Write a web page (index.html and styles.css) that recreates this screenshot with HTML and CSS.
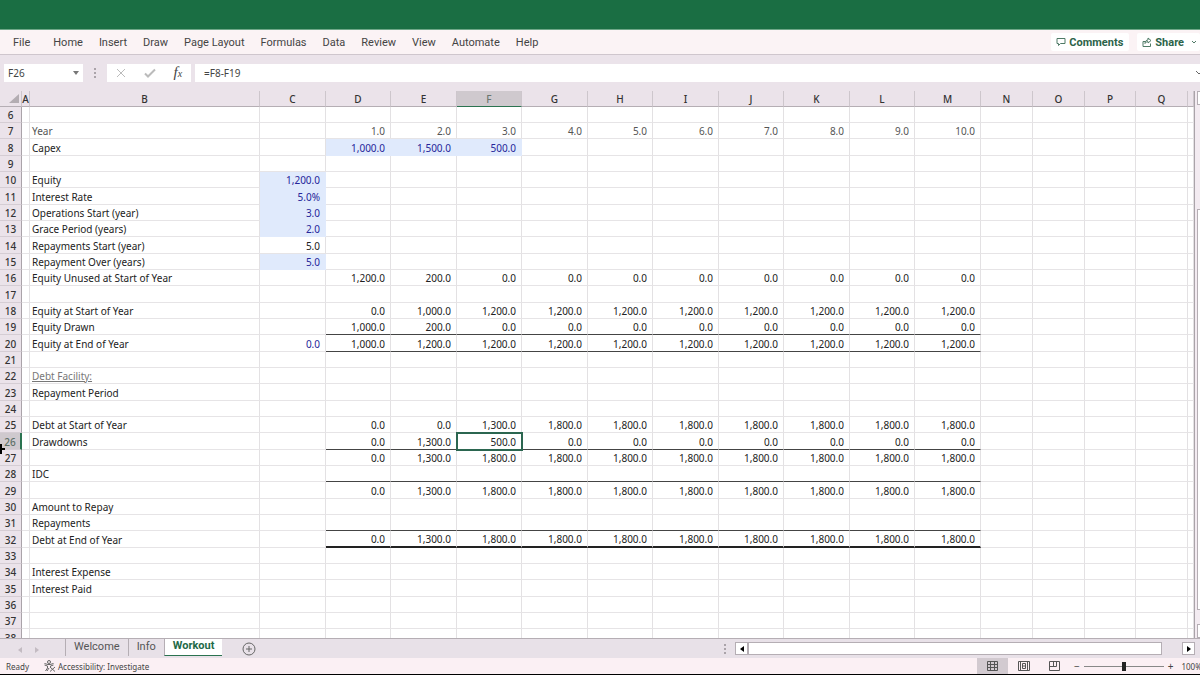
FILE: index.html
```
<!DOCTYPE html>
<html lang="en">
<head>
    <meta charset="UTF-8">
    <meta name="viewport" content="width=device-width, initial-scale=1.0">
    <title>Debt Schedule - Workout</title>
    <link rel="stylesheet" href="styles.css">
</head>
<body>
    <div class="titlebar"></div>

    <header class="ribbon">
        <nav class="menu">
            <button class="file">File</button>
            <button>Home</button>
            <button>Insert</button>
            <button>Draw</button>
            <button>Page Layout</button>
            <button>Formulas</button>
            <button>Data</button>
            <button>Review</button>
            <button>View</button>
            <button>Automate</button>
            <button>Help</button>
        </nav>
        <div class="actions">
            <button class="action">
                <svg width="10" height="10" viewBox="0 0 10 10"><path d="M1 1.5h8v5H4.5L2.5 8.500V6.500H1z"/></svg>
                Comments
            </button>
            <button class="action share">
                <svg width="10" height="10" viewBox="0 0 10 10"><path d="M3 4.500H1V9.500h7.500V6.500M3 6.500c0-2.500 1.500-3.500 3-3.500V1L9 3.500 6 6V4.500C5 4.500 4 5 3 6.500z"/></svg>
                Share
                <svg class="caret" width="6" height="6" viewBox="0 0 6 6"><path d="M1 2l2 2 2-2"/></svg>
            </button>
        </div>
    </header>

    <div class="formula-row">
        <div class="name-box">
            <input type="text" value="F26" aria-label="Name box">
            <svg width="6" height="4" viewBox="0 0 6 4"><path d="M0 0h6L3 4z"/></svg>
        </div>
        <span class="dots"></span>
        <div class="fx-buttons">
            <button aria-label="Cancel"><svg width="10" height="10" viewBox="0 0 10 10"><path d="M1 1l8 8M9 1L1 9"/></svg></button>
            <button aria-label="Enter"><svg width="12" height="10" viewBox="0 0 12 10"><path class="tick" d="M1 5.500L4 8.500 11 1.500"/></svg></button>
            <button class="fx" aria-label="Insert function"><i>f</i><i class="x">x</i></button>
        </div>
        <div class="formula">
            <input type="text" value="=F8-F19" aria-label="Formula bar">
            <svg width="5" height="6" viewBox="0 0 5 6"><path d="M1 1l3 3 3-3"/></svg>
        </div>
    </div>

    <main class="workspace">
        <div class="sheet">
            <table>
                <colgroup>
                    <col class="c-num"><col class="c-a"><col class="c-b">
                    <col class="wide"><col class="mid"><col class="wide"><col class="mid"><col class="wide"><col class="mid">
                    <col class="wide"><col class="mid"><col class="wide"><col class="mid"><col class="wide">
                    <col class="small"><col class="small"><col class="smaller"><col class="small"><col>
                </colgroup>
                <thead>
                    <tr id="letters"></tr>
                </thead>
                <tbody id="rows"></tbody>
            </table>
        </div>
        <div class="vscroll">
            <button aria-label="Scroll up"></button>
            <span class="track"></span>
            <span class="thumb"></span>
            <span class="gap"></span>
            <button aria-label="Scroll down"></button>
        </div>
        <svg class="cursor" width="6" height="12" viewBox="0 0 6 12"><path d="M0 5h5v2H0zM0 1h2v10H0z"/></svg>
    </main>

    <div class="tabs">
        <div class="tab-nav">
            <button aria-label="Previous sheet"><svg width="4" height="6" viewBox="0 0 4 6"><path d="M4 0v6L0 3z"/></svg></button>
            <button aria-label="Next sheet"><svg width="4" height="6" viewBox="0 0 4 6"><path d="M0 0v6l4-3z"/></svg></button>
        </div>
        <button class="tab">Welcome</button>
        <button class="tab">Info</button>
        <button class="tab active">Workout</button>
        <button class="add" aria-label="New sheet">
            <svg width="14" height="14" viewBox="0 0 14 14"><circle cx="7" cy="7" r="6"/><path d="M7 4v6M4 7h6"/></svg>
        </button>
        <div class="hscroll">
            <span class="dots"></span>
            <button aria-label="Scroll left"><svg width="4" height="6" viewBox="0 0 4 6"><path d="M4 0v6L0 3z"/></svg></button>
            <span class="thumb"></span>
            <span class="track"></span>
            <button aria-label="Scroll right"><svg width="4" height="6" viewBox="0 0 4 6"><path d="M0 0v6l4-3z"/></svg></button>
        </div>
    </div>

    <footer class="status">
        <span class="ready">Ready</span>
        <button class="access">
            <svg width="12" height="12" viewBox="0 0 12 12"><circle cx="5" cy="2" r="1.500"/><path d="M.5 3.500L4 4.500h2l3.500-1M.5 5l3 1v2L1.500 11M3 11l2-3M9.500 5l-3 1v1M6 7l5 4.500M11 7l-5 4.500"/></svg>
            Accessibility: Investigate
        </button>
        <div class="views">
            <button class="on" aria-label="Normal"><svg width="12" height="12" viewBox="0 0 12 12"><path d="M.5 1.500h10v9H.5zM.5 4.500h10M.5 7.500h10M3.500 1.500v9M7.500 1.500v9"/></svg></button>
            <button aria-label="Page layout"><svg width="12" height="12" viewBox="0 0 12 12"><path d="M.5 1.500h11v9H.5zM2.500 1.500v9M9.500 1.500v9M4.500 3.500h3v5h-3zM4.500 6h3"/></svg></button>
            <button aria-label="Page break preview"><svg width="12" height="12" viewBox="0 0 12 12"><path d="M.5 1.500h10v9H.5zM4.500 1.500v5M.5 6.500h7M7.500 1.500v5"/></svg></button>
        </div>
        <div class="zoom">
            <span>−</span>
            <input type="range" min="10" max="190" value="100" aria-label="Zoom">
            <span>+</span>
            <span class="percent">100%</span>
        </div>
    </footer>

    <script src="script.js"></script>
</body>
</html>
```
FILE: styles.css
```
* {
    box-sizing: border-box;
    margin: 0;
    padding: 0;
}

body {
    height: 100vh;
    display: flex;
    flex-direction: column;
    overflow: hidden;
    background-color: #ebe3ea;
    border-bottom: 1px solid #000;
    font-family: "Noto Sans", "Open Sans", sans-serif;
    font-size: 10px;
    color: #444;
}

button, input {
    font: inherit;
    color: inherit;
    border: none;
    background: none;
}

svg {
    fill: none;
    stroke: #666;
    flex: none;
}

.titlebar {
    height: 30px;
    flex: none;
    background-color: #1a6e43;
    border-bottom: 1px solid #6fa788;
}

/* ribbon */
.ribbon {
    height: 25px;
    flex: none;
    display: flex;
    justify-content: space-between;
    align-items: center;
    background-color: #fbf3f5;
    border-bottom: 1px solid #cfc6cd;
    font-family: Roboto, sans-serif;
    font-size: 11px;
}

.menu {
    display: flex;
    gap: 16px;
    padding-left: 13px;
}

.menu .file {
    margin-right: 7px;
}

.actions {
    display: flex;
    gap: 8px;
}

.action {
    display: flex;
    align-items: center;
    gap: 3px;
    height: 18px;
    padding: 0 6px 0 5px;
    background-color: #fff;
    border-radius: 2px;
    font-weight: 700;
    color: #2c6349;
}

.action svg {
    stroke: #4f7a66;
}

.share {
    padding-right: 3px;
}

.share .caret {
    margin-left: 4px;
}

/* formula bar */
.formula-row {
    height: 36px;
    flex: none;
    display: flex;
    padding: 9px 0 9px 4px;
    background-color: #ebe3ea;
}

.name-box {
    width: 79px;
    display: flex;
    align-items: center;
    padding: 0 4px;
    background-color: #fff;
}

.name-box input {
    width: 100%;
}

.name-box svg {
    fill: #777;
    stroke: none;
}

.dots {
    width: 2px;
    height: 10px;
    margin: 4px 11px;
    background: repeating-linear-gradient(#aaa3a9 0 2px, transparent 2px 4px);
}

.fx-buttons {
    width: 84px;
    display: flex;
    justify-content: space-around;
    align-items: center;
    margin-right: 4px;
    background-color: #fff;
}

.fx-buttons svg {
    display: block;
    stroke: #bbb;
}

.fx-buttons .tick {
    stroke-width: 2;
}

.fx {
    font-family: "Liberation Serif", serif;
    font-size: 15px;
    line-height: 16px;
}

.fx .x {
    font-size: 10px;
}

.formula {
    flex: 1;
    display: flex;
    align-items: center;
    padding-left: 9px;
    background-color: #fff;
}

.formula input {
    flex: 1;
}

/* sheet */
.workspace {
    position: relative;
    flex: 1;
    min-height: 0;
    display: flex;
}

.sheet {
    flex: 1;
    min-width: 0;
    overflow: hidden;
    background-color: #fff;
}

table {
    width: 100%;
    table-layout: fixed;
    border-collapse: separate;
    border-spacing: 0;
    color: #222;
}

.c-num { width: 22px; }
.c-a { width: 8px; }
.c-b { width: 230px; }
.wide { width: 66px; }
.mid { width: 65px; }
.small { width: 52px; }
.smaller { width: 51px; }

th {
    background-color: #ebe3ea;
    font-weight: 500;
    line-height: 14px;
    color: #333;
    border-right: 1px solid #cdc6cc;
    border-bottom: 1px solid #b5aeb4;
}

thead th {
    height: 16px;
}

thead th.current {
    background-color: #cfc9ce;
    border-bottom-color: #2b7350;
    color: #6b756f;
}

.corner svg {
    display: block;
    margin-left: 9px;
    fill: #b3adb2;
    stroke: none;
}

tbody tr {
    height: 16px;
}

tbody tr:nth-child(3n) {
    height: 17px;
}

tbody th {
    border-right: 1px solid #aaa3a9;
    border-bottom-color: #d5cdd4;
}

tbody th, td {
    padding-top: 1px;
    line-height: 14px;
    vertical-align: bottom;
}

tbody th.current {
    background-color: #cfc9ce;
    border-right: 2px solid #2b7350;
    color: #5d7067;
}

td {
    padding-right: 5px;
    border-right: 1px solid #e3e1e3;
    border-bottom: 1px solid #e6e4e6;
    text-align: right;
    white-space: nowrap;
}

td.label {
    padding-left: 2px;
    text-align: left;
}

td.heading {
    color: #777;
    text-decoration: underline;
}

td.muted {
    color: #555;
}

td.input {
    color: #26269a;
}

td.shade {
    background-color: #e0eafc;
    border-color: #e0eafc;
}

td.line {
    border-bottom: 1px solid #444;
}

td.total {
    padding-top: 0;
    border-bottom: 2px solid #222;
}

td.selected {
    outline: 2px solid #2b6650;
    outline-offset: -1px;
}

.cursor {
    position: absolute;
    left: 0;
    top: 352px;
    fill: #000;
    stroke: none;
}

.vscroll {
    width: 6px;
    display: flex;
    flex-direction: column;
    padding-left: 2px;
    border-left: 1px solid #aaa3a9;
    background-color: #f3ebf1;
}

.vscroll button, .vscroll .thumb {
    height: 14px;
    border: 1px solid #b5aeb4;
    border-right: none;
    background-color: #fff;
}

.vscroll .track {
    width: 3px;
    height: 19%;
}

.vscroll .thumb {
    flex: 1;
}

.vscroll .gap {
    height: 14px;
}

/* sheet tabs */
.tabs {
    height: 20px;
    flex: none;
    display: flex;
    border-top: 1px solid #b5aeb4;
    background-color: #e8e1e8;
}

.tab-nav {
    width: 65px;
    display: flex;
    gap: 13px;
    padding-left: 18px;
}

.tab-nav svg {
    fill: #c3bbc2;
    stroke: none;
}

.tab {
    height: 17px;
    padding: 0 8px 2px;
    border-left: 1px solid #b5aeb4;
    font-family: Roboto, sans-serif;
    font-size: 11px;
    line-height: 14px;
    color: #555;
}

.tab.active {
    background-color: #fff;
    border-bottom: 1px solid #2b7350;
    font-weight: 700;
    color: #1f6a48;
}

.add {
    margin-left: 20px;
}

.add svg {
    display: block;
}

.hscroll {
    width: 41%;
    display: flex;
    align-items: center;
    margin-left: auto;
    padding-right: 5px;
}

.hscroll .dots {
    margin: 4px 9px 4px 16px;
}

.hscroll button {
    width: 13px;
    height: 13px;
    display: flex;
    justify-content: center;
    align-items: center;
    border: 1px solid #b5aeb4;
    background-color: #fff;
}

.hscroll button svg {
    fill: #000;
    stroke: none;
}

.hscroll .thumb {
    flex: 1;
    height: 13px;
    border: 1px solid #b5aeb4;
    background-color: #fff;
}

.track {
    width: 20px;
}

/* status bar */
.status {
    height: 16px;
    flex: none;
    display: flex;
    align-items: center;
    padding-left: 6px;
    overflow: hidden;
    background-color: #fbf0f4;
    font-size: 8px;
    white-space: nowrap;
}

.access {
    display: flex;
    align-items: center;
    gap: 2px;
    margin-left: 15px;
}

.views {
    display: flex;
    margin-left: auto;
}

.views button {
    width: 31px;
    height: 16px;
    display: flex;
    justify-content: center;
    align-items: center;
}

.views svg {
    stroke: #555;
}

.views .on {
    background-color: #d2cad0;
}

.zoom {
    width: 130px;
    display: flex;
    align-items: center;
    gap: 4px;
    padding-left: 4px;
    font-size: 10px;
}

.zoom input {
    width: 80px;
    height: 12px;
    appearance: none;
    background: linear-gradient(#888, #888) center / 100% 1px no-repeat;
}

.zoom input::-webkit-slider-thumb {
    appearance: none;
    width: 4px;
    height: 9px;
    background-color: #222;
}

.percent {
    margin-left: 4px;
    font-size: 8px;
}
```
FILE: script.js
```
const letters = "ABCDEFGHIJKLMNOPQ".split("");
const fill = (first, rest) => first.concat(Array(10 - first.length).fill(rest));

// label = column B, c = column C, values = columns D to M
const sheet = {
    7: { label: "Year", muted: true, values: ["1.0", "2.0", "3.0", "4.0", "5.0", "6.0", "7.0", "8.0", "9.0", "10.0"] },
    8: { label: "Capex", shade: true, values: ["1,000.0", "1,500.0", "500.0"] },
    10: { label: "Equity", c: "1,200.0", shade: true },
    11: { label: "Interest Rate", c: "5.0%", shade: true },
    12: { label: "Operations Start (year)", c: "3.0", shade: true },
    13: { label: "Grace Period (years)", c: "2.0", shade: true },
    14: { label: "Repayments Start (year)", c: "5.0" },
    15: { label: "Repayment Over (years)", c: "5.0", shade: true },
    16: { label: "Equity Unused at Start of Year", values: fill(["1,200.0", "200.0"], "0.0") },
    18: { label: "Equity at Start of Year", values: fill(["0.0", "1,000.0"], "1,200.0") },
    19: { label: "Equity Drawn", line: "line", values: fill(["1,000.0", "200.0"], "0.0") },
    20: { label: "Equity at End of Year", c: "0.0", input: true, line: "line", values: fill(["1,000.0"], "1,200.0") },
    22: { label: "Debt Facility:", heading: true },
    23: { label: "Repayment Period" },
    25: { label: "Debt at Start of Year", values: fill(["0.0", "0.0", "1,300.0"], "1,800.0") },
    26: { label: "Drawdowns", line: "line", values: fill(["0.0", "1,300.0", "500.0"], "0.0") },
    27: { values: fill(["0.0", "1,300.0"], "1,800.0") },
    28: { label: "IDC", line: "line" },
    29: { values: fill(["0.0", "1,300.0"], "1,800.0") },
    30: { label: "Amount to Repay" },
    31: { label: "Repayments", line: "line" },
    32: { label: "Debt at End of Year", line: "total", values: fill(["0.0", "1,300.0"], "1,800.0") },
    34: { label: "Interest Expense" },
    35: { label: "Interest Paid" },
};

const addCell = (row, tag, text, classes = []) => {
    const cell = document.createElement(tag);
    cell.textContent = text || "";
    cell.classList.add(...classes);
    row.appendChild(cell);
    return cell;
};

const head = document.querySelector("#letters");
const corner = addCell(head, "th", "", ["corner"]);
corner.innerHTML = '<svg width="10" height="9" viewBox="0 0 10 9"><path d="M10 0v9H0z"/></svg>';
letters.forEach((letter) => addCell(head, "th", letter, letter === "F" ? ["current"] : []));
addCell(head, "th", "");

const body = document.querySelector("#rows");
for (let n = 6; n <= 38; n++) {
    const data = sheet[n] || {};
    const row = document.createElement("tr");
    addCell(row, "th", n, n === 26 ? ["current"] : []);
    addCell(row, "td", "");

    const labelClass = ["label"];
    if (data.heading) labelClass.push("heading");
    if (data.muted) labelClass.push("muted");
    addCell(row, "td", data.label, labelClass);

    const cClass = [];
    if (data.c && data.shade) cClass.push("shade", "input");
    if (data.input) cClass.push("input");
    addCell(row, "td", data.c, cClass);

    for (let i = 0; i < 10; i++) {
        const value = data.values ? data.values[i] : "";
        const classes = [];
        if (value && data.shade) classes.push("shade", "input");
        if (data.muted) classes.push("muted");
        if (data.line) classes.push(data.line);
        if (n === 26 && i === 2) classes.push("selected");
        addCell(row, "td", value, classes);
    }

    // N to Q and the cut-off column
    for (let i = 0; i < 5; i++) addCell(row, "td", "");
    body.appendChild(row);
}
```
